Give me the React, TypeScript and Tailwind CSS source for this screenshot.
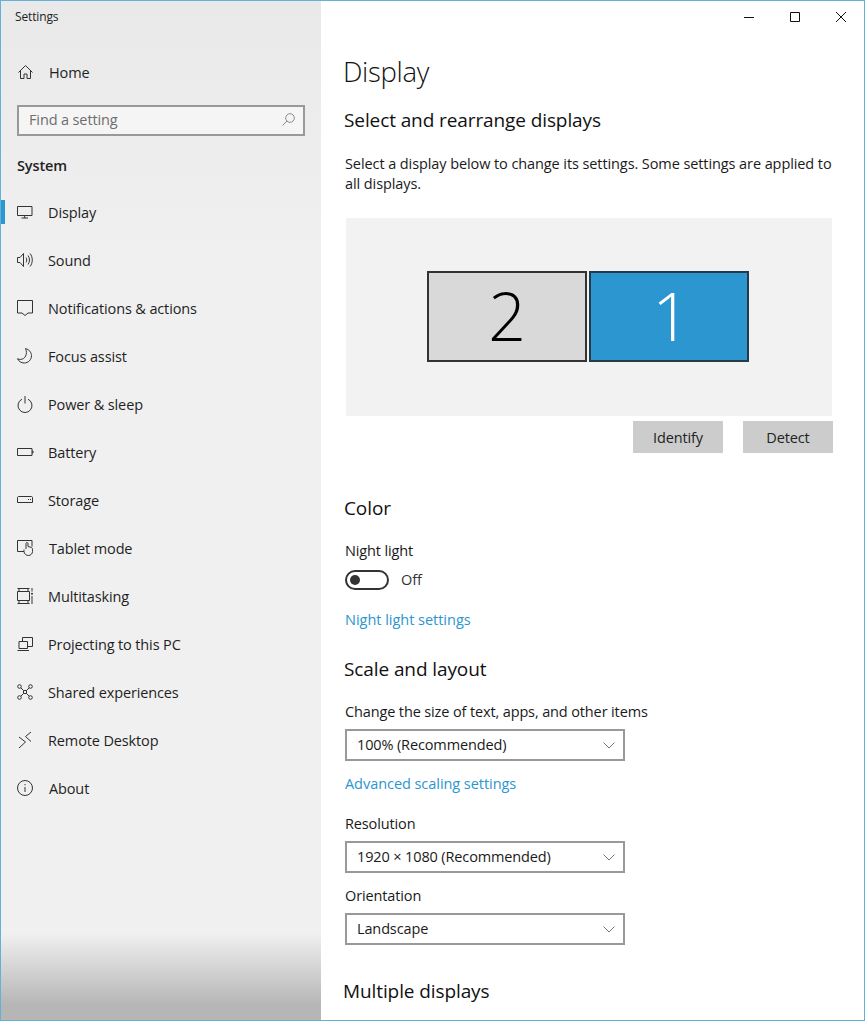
import type { ReactNode } from 'react'

const S = { fill: 'none', stroke: 'currentColor', strokeWidth: 1 }

function Icon({ children }: { children: ReactNode }) {
  return (
    <svg width="16" height="16" viewBox="0 0 16 16" className="shrink-0 overflow-visible text-[#333]" {...S}>
      {children}
    </svg>
  )
}

const navItems: { label: string; icon: ReactNode; active?: boolean; wide?: boolean }[] = [
  {
    label: 'Display',
    active: true,
    icon: (
      <Icon>
        <path d="M.5 2.500h14.500v9H.5zM7.700 11.500v2.500M4.500 14h6.500" />
      </Icon>
    ),
  },
  {
    label: 'Sound',
    icon: (
      <Icon>
        <path d="M.5 5.500h2.500l3.500-4v13l-3.500-4h-2.500zM9 5.500c1 1.500 1 3.500 0 5M11 3.500c2 2.500 2 6.500 0 9M13 1.500c3 3.500 3 9.500 0 13" />
      </Icon>
    ),
  },
  {
    label: 'Notifications & actions',
    icon: (
      <Icon>
        <path d="M.5.5h15v12.500h-4.500l-3 2.500-3-2.500h-4.500z" />
      </Icon>
    ),
  },
  {
    label: 'Focus assist',
    icon: (
      <Icon>
        <path d="M8.500.5c3.500 1 6 3.800 6 7.200 0 4.100-3.300 7.300-7.300 7.300-3 0-5.500-1.700-6.700-4.200 1 .4 2 .6 3 .6 4.500 0 7.500-5.500 5-10.900z" />
      </Icon>
    ),
  },
  {
    label: 'Power & sleep',
    icon: (
      <Icon>
        <path d="M5 3.200a7 7 0 1 0 6 0M8 0v7.500" />
      </Icon>
    ),
  },
  {
    label: 'Battery',
    icon: (
      <Icon>
        <path d="M.5 4.500h14.500v7h-14.500zM15 7h1v2h-1" />
      </Icon>
    ),
  },
  {
    label: 'Storage',
    icon: (
      <Icon>
        <path d="M.5 5.500c0-.5.5-1 1-1h13c.5 0 1 .5 1 1v5h-15zM11 7.500h1M13 7.500h1" />
      </Icon>
    ),
  },
  {
    label: 'Tablet mode',
    wide: true,
    icon: (
      <Icon>
        <path d="M7 11.500h-6.500v-11h14.500v6M9 9v-5.500c0-1.300 2-1.300 2 0v3l3 .8c1 .3 1.500 1 1.500 2v2.200c0 2.200-1.800 4-4 4s-4.500-1.700-4.500-4v-2" />
      </Icon>
    ),
  },
  {
    label: 'Multitasking',
    icon: (
      <Icon>
        <path d="M.5.5h12M2 .5v3M11 .5v3M.5 3.500h12v9h-12zM.5 15.500h12M2 12.500v3M11 12.500v3M15 0v3.500M15 8v8" />
        <circle cx="15" cy="5.700" r="1" fill="currentColor" stroke="none" />
      </Icon>
    ),
  },
  {
    label: 'Projecting to this PC',
    icon: (
      <Icon>
        <path d="M5.500 5v-3.500h10v9h-4.500M2 5.500h8.500v7h-8.500zM.5 14.500h11.500" />
      </Icon>
    ),
  },
  {
    label: 'Shared experiences',
    icon: (
      <Icon>
        <circle cx="2.500" cy="2.500" r="1.800" />
        <circle cx="13.500" cy="2.500" r="1.800" />
        <circle cx="2.500" cy="13.500" r="1.800" />
        <circle cx="13.500" cy="13.500" r="1.800" />
        <path d="M4 4l2.500 2.500M12 4l-2.500 2.500M4 12l2.500-2.500M12 12l-2.500-2.500M6.500 6.500h3v3h-3z" />
      </Icon>
    ),
  },
  {
    label: 'Remote Desktop',
    icon: (
      <Icon>
        <path d="M2 5l6.500 5-6.500 6M14 0l-5.500 4.500 5.500 5" />
      </Icon>
    ),
  },
  {
    label: 'About',
    wide: true,
    icon: (
      <Icon>
        <circle cx="8" cy="8" r="7.500" />
        <path d="M8 7v5M8 4v1.300" />
      </Icon>
    ),
  },
]

function NavRow({ label, icon, active, wide }: { label: string; icon: ReactNode; active?: boolean; wide?: boolean }) {
  return (
    <div className="h-12 flex items-center text-[#1f1f1f]">
      <span className={active ? 'w-1 h-6 bg-[#2b96cf]' : 'w-1 h-6'} />
      <span className="ml-3">{icon}</span>
      <span className={wide ? 'ml-4 pt-0.5' : 'ml-[15px] pt-0.5'}>{label}</span>
    </div>
  )
}

function Select({ value }: { value: string }) {
  return (
    <div className="w-[280px] h-8 border-2 border-[#999] pl-[10px] pr-[8px] flex items-center justify-between text-[#1a1a1a]">
      <span>{value}</span>
      <svg width="12" height="7" viewBox="0 0 12 7" fill="none" stroke="#777" strokeWidth="1">
        <path d="M.5.5l5.500 5.500 5.500-5.500" />
      </svg>
    </div>
  )
}

function H2({ children, className }: { children: ReactNode; className: string }) {
  return <h2 className={`text-[19px] leading-7 tracking-[-0.1px] text-[#111] ${className}`}>{children}</h2>
}

export default function App() {
  return (
    <div className="w-[865px] h-[1021px] overflow-hidden border border-[#62b1d9] bg-white flex font-['Open_Sans',sans-serif] text-[14.5px] leading-5 tracking-[-0.13px]">
      {/* Sidebar */}
      <aside className="w-[320px] shrink-0 bg-[linear-gradient(180deg,#e9e9e9_0%,#f0f0f0_25%,#f0f0f0_91.5%,#b6b6b6_98.5%)]">
        <div className="pt-2 pl-[14px] text-xs leading-4 text-[#222]">Settings</div>
        <div className="mt-[23px]">
          <NavRow
            label="Home"
            wide
            icon={
              <Icon>
                <path d="M1.500 8.500l7-7 7 7M3.500 6.500v8h3.500v-4.500h3v4.500h3.500v-8" />
              </Icon>
            }
          />
        </div>
        <div className="mt-[9px] ml-4 w-[288px] h-[31px] border-2 border-[#999] bg-[#f5f5f5] pl-[10px] pr-2 pb-0.5 flex items-center justify-between text-[#6e6e6e]">
          <span>Find a setting</span>
          <svg width="13" height="13" viewBox="0 0 13 13" fill="none" stroke="#8a8a8a" strokeWidth="1">
            <circle cx="8" cy="5" r="4.300" />
            <path d="M5 8l-4.500 4.500" />
          </svg>
        </div>
        <div className="mt-5 pl-4 font-semibold text-[#1f1f1f]">System</div>
        <nav className="mt-3">
          {navItems.map((item) => (
            <NavRow key={item.label} {...item} />
          ))}
        </nav>
      </aside>

      {/* Content */}
      <main className="flex-1 min-w-0">
        <div className="h-[31px] flex justify-end">
          <div className="w-[46px] flex items-center justify-center">
            <svg width="10" height="10" viewBox="0 0 10 10" stroke="#111" strokeWidth="1">
              <path d="M0 5.500h10" />
            </svg>
          </div>
          <div className="w-[46px] flex items-center justify-center">
            <svg width="10" height="10" viewBox="0 0 10 10" fill="none" stroke="#111" strokeWidth="1">
              <path d="M.5.5h9v9h-9z" />
            </svg>
          </div>
          <div className="w-[46px] flex items-center justify-center">
            <svg width="10" height="10" viewBox="0 0 10 10" stroke="#111" strokeWidth="1">
              <path d="M0 0l10 10M10 0l-10 10" />
            </svg>
          </div>
        </div>

        <div className="pl-[23px] pr-[30px]">
          <h1 className="mt-5 -ml-px text-[27.5px] leading-10 font-light tracking-[-0.3px] text-[#111]">Display</h1>
          <H2 className="mt-[14px]">Select and rearrange displays</H2>
          <p className="mt-5 pl-px tracking-[-0.09px] text-[#1a1a1a]">
            Select a display below to change its settings. Some settings are applied to all displays.
          </p>

          <div className="mt-6 ml-0.5 w-[486px] h-[198px] bg-[#f2f2f2] pt-[53px] pr-0.5 flex justify-center gap-0.5">
            <div className="w-40 h-[91px] border-2 border-[#333] bg-[#d9d9d9] pb-1 flex items-center justify-center text-[66px] font-light text-black">
              2
            </div>
            <div className="w-40 h-[91px] border-2 border-[#263a47] bg-[#2b96cf] pb-1 pl-1 flex items-center justify-center text-[66px] font-light text-white">
              1
            </div>
          </div>

          <div className="mt-[5px] ml-0.5 w-[487px] flex justify-end gap-5">
            <div className="w-[90px] h-8 bg-[#ccc] pt-0.5 flex items-center justify-center text-[#222]">Identify</div>
            <div className="w-[90px] h-8 bg-[#ccc] pt-0.5 flex items-center justify-center text-[#222]">Detect</div>
          </div>

          <H2 className="mt-[41px]">Color</H2>
          <div className="mt-[18px] pl-px pt-px -mb-px text-[#1a1a1a]">Night light</div>
          <div className="mt-2.5 ml-px flex items-center gap-3 text-[#333]">
            <span className="w-11 h-5 border-2 border-[#333] rounded-full flex items-center pl-[3px]">
              <span className="w-2.5 h-2.5 rounded-full bg-[#333]" />
            </span>
            <span>Off</span>
          </div>
          <div className="mt-5 pl-px tracking-[-0.02px] text-[#2b96cf]">Night light settings</div>

          <H2 className="mt-[25px]">Scale and layout</H2>
          <div className="mt-[19px] pl-px text-[#1a1a1a]">Change the size of text, apps, and other items</div>
          <div className="mt-[7px] ml-px">
            <Select value="100% (Recommended)" />
          </div>
          <div className="mt-[13px] pl-px tracking-[-0.05px] text-[#2b96cf]">Advanced scaling settings</div>
          <div className="mt-[19px] pl-px pt-px -mb-px text-[#1a1a1a]">Resolution</div>
          <div className="mt-2 ml-px">
            <Select value="1920 × 1080 (Recommended)" />
          </div>
          <div className="mt-3 pl-px pt-px -mb-px text-[#1a1a1a]">Orientation</div>
          <div className="mt-2 ml-px">
            <Select value="Landscape" />
          </div>
          <H2 className="mt-8 -ml-px">Multiple displays</H2>
        </div>
      </main>
    </div>
  )
}
